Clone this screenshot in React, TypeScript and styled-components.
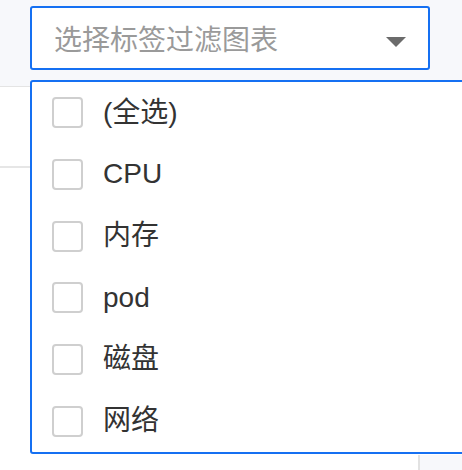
import React from "react";
import styled, { createGlobalStyle } from "styled-components";

const Global = createGlobalStyle`
  html, body { margin: 0; padding: 0; background: #ffffff; }
  body { font-family: "Liberation Sans", "Noto Sans CJK SC", sans-serif; }
  #root { width: 462px; height: 470px; overflow: hidden; }
`;

const Page = styled.div`
  position: relative;
  width: 462px;
  height: 470px;
  display: flex;
  flex-direction: column;
  background: #ffffff;
  overflow: hidden;
`;

const TopBar = styled.div`
  height: 87px;
  flex: none;
  box-sizing: border-box;
  background: #f7f8fb;
  border-bottom: 1px solid #e4e4e4;
  padding: 6px 0 0 30px;
`;

const SelectBox = styled.div`
  box-sizing: border-box;
  width: 400px;
  height: 64px;
  border: 2px solid #1570f2;
  border-radius: 3px;
  background: #ffffff;
  display: flex;
  align-items: center;
  justify-content: space-between;
  padding: 0 22px 0 22px;
`;

const Placeholder = styled.span`
  font-size: 28px;
  color: #9a9a9a;
  line-height: 1;
  font-family: "Noto Sans CJK SC", sans-serif;
`;

const Arrow = styled.svg`
  width: 20px;
  height: 10px;
  margin-top: 7px;
  display: block;
`;

const Body = styled.div`
  flex: 1;
  display: flex;
  flex-direction: column;
`;

const BgRow = styled.div`
  height: 79px;
  width: 60px;
  border-bottom: 2px solid #e6e6e6;
  flex: none;
`;

const Spacer = styled.div`
  flex: 1;
`;

const BgPanel = styled.div`
  margin-left: 418px;
  height: 15px;
  background: #f7f8fb;
  border-left: 2px solid #e2e2e2;
`;

const Dropdown = styled.div`
  position: absolute;
  left: 30px;
  top: 80px;
  width: 460px;
  height: 374px;
  box-sizing: border-box;
  border: 2px solid #1570f2;
  border-radius: 3px;
  background: #ffffff;
  display: flex;
  flex-direction: column;
`;

const Option = styled.div`
  height: 61.67px;
  flex: none;
  display: flex;
  align-items: center;
  padding-left: 20px;
  gap: 20px;
`;

const Check = styled.span`
  width: 31px;
  height: 31px;
  box-sizing: border-box;
  border: 2px solid #cfcfcf;
  border-radius: 4px;
  background: #fff;
  flex: none;
`;

const Label = styled.span`
  font-size: 28px;
  color: #333333;
  line-height: 1;
  font-family: "Liberation Sans", "Noto Sans CJK SC", sans-serif;
`;

const items = ["(全选)", "CPU", "内存", "pod", "磁盘", "网络"];

export default function App() {
  return (
    <>
      <Global />
      <Page>
        <TopBar>
          <SelectBox>
            <Placeholder>选择标签过滤图表</Placeholder>
            <Arrow viewBox="0 0 20 10">
              <polygon points="0,0 20,0 10,10" fill="#6b6b6b" />
            </Arrow>
          </SelectBox>
        </TopBar>
        <Body>
          <BgRow />
          <Spacer />
          <BgPanel />
        </Body>
        <Dropdown>
          {items.map((t) => (
            <Option key={t}>
              <Check />
              <Label>{t}</Label>
            </Option>
          ))}
        </Dropdown>
      </Page>
    </>
  );
}
